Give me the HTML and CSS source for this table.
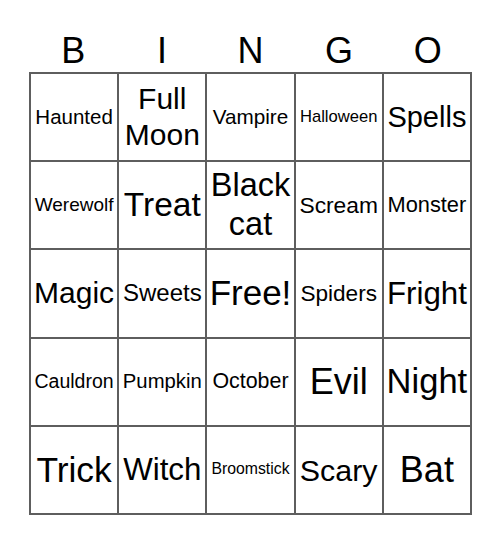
FILE: index.html
```html
<!DOCTYPE html>
<html>
<head>
<meta charset="utf-8">
<link rel="stylesheet" href="styles.css">
</head>
<body>
<div class="card">
  <div class="head">
    <span>B</span><span>I</span><span>N</span><span>G</span><span>O</span>
  </div>
  <div class="grid">
    <div class="cell" style="font-size:20.5px">Haunted</div>
    <div class="cell" style="font-size:30px">Full Moon</div>
    <div class="cell" style="font-size:20.7px">Vampire</div>
    <div class="cell" style="font-size:16.6px">Halloween</div>
    <div class="cell" style="font-size:29px">Spells</div>

    <div class="cell" style="font-size:19px">Werewolf</div>
    <div class="cell" style="font-size:33.5px">Treat</div>
    <div class="cell" style="font-size:32.5px">Black cat</div>
    <div class="cell" style="font-size:22.8px">Scream</div>
    <div class="cell" style="font-size:21.8px">Monster</div>

    <div class="cell" style="font-size:30px">Magic</div>
    <div class="cell" style="font-size:24px">Sweets</div>
    <div class="cell" style="font-size:35px">Free!</div>
    <div class="cell" style="font-size:22.6px">Spiders</div>
    <div class="cell" style="font-size:31.3px">Fright</div>

    <div class="cell" style="font-size:19.5px">Cauldron</div>
    <div class="cell" style="font-size:20.3px">Pumpkin</div>
    <div class="cell" style="font-size:21.4px">October</div>
    <div class="cell" style="font-size:36px">Evil</div>
    <div class="cell" style="font-size:34.5px">Night</div>

    <div class="cell" style="font-size:35.4px">Trick</div>
    <div class="cell" style="font-size:31.3px">Witch</div>
    <div class="cell" style="font-size:15.8px">Broomstick</div>
    <div class="cell" style="font-size:30.4px">Scary</div>
    <div class="cell" style="font-size:36px">Bat</div>
  </div>
</div>
</body>
</html>
```

FILE: styles.css
```css
html, body {
  margin: 0;
  padding: 0;
  background: #fff;
}
body {
  font-family: "Liberation Sans", Arial, sans-serif;
  color: #000;
}
.card {
  width: 443px;
  margin-left: 29px;
  padding-top: 30px;
}
.head {
  display: grid;
  grid-template-columns: repeat(5, 1fr);
  font-size: 36px;
  line-height: 42px;
  height: 42px;
  text-align: center;
}
.grid {
  display: grid;
  grid-template-columns: repeat(5, 1fr);
  grid-auto-rows: 88.2px;
  border-top: 2px solid #5e5e5e;
  border-left: 2px solid #5e5e5e;
}
.cell {
  display: flex;
  align-items: center;
  justify-content: center;
  text-align: center;
  line-height: 1.2;
  border-right: 2px solid #5e5e5e;
  border-bottom: 2px solid #5e5e5e;
  overflow: hidden;
}
```
